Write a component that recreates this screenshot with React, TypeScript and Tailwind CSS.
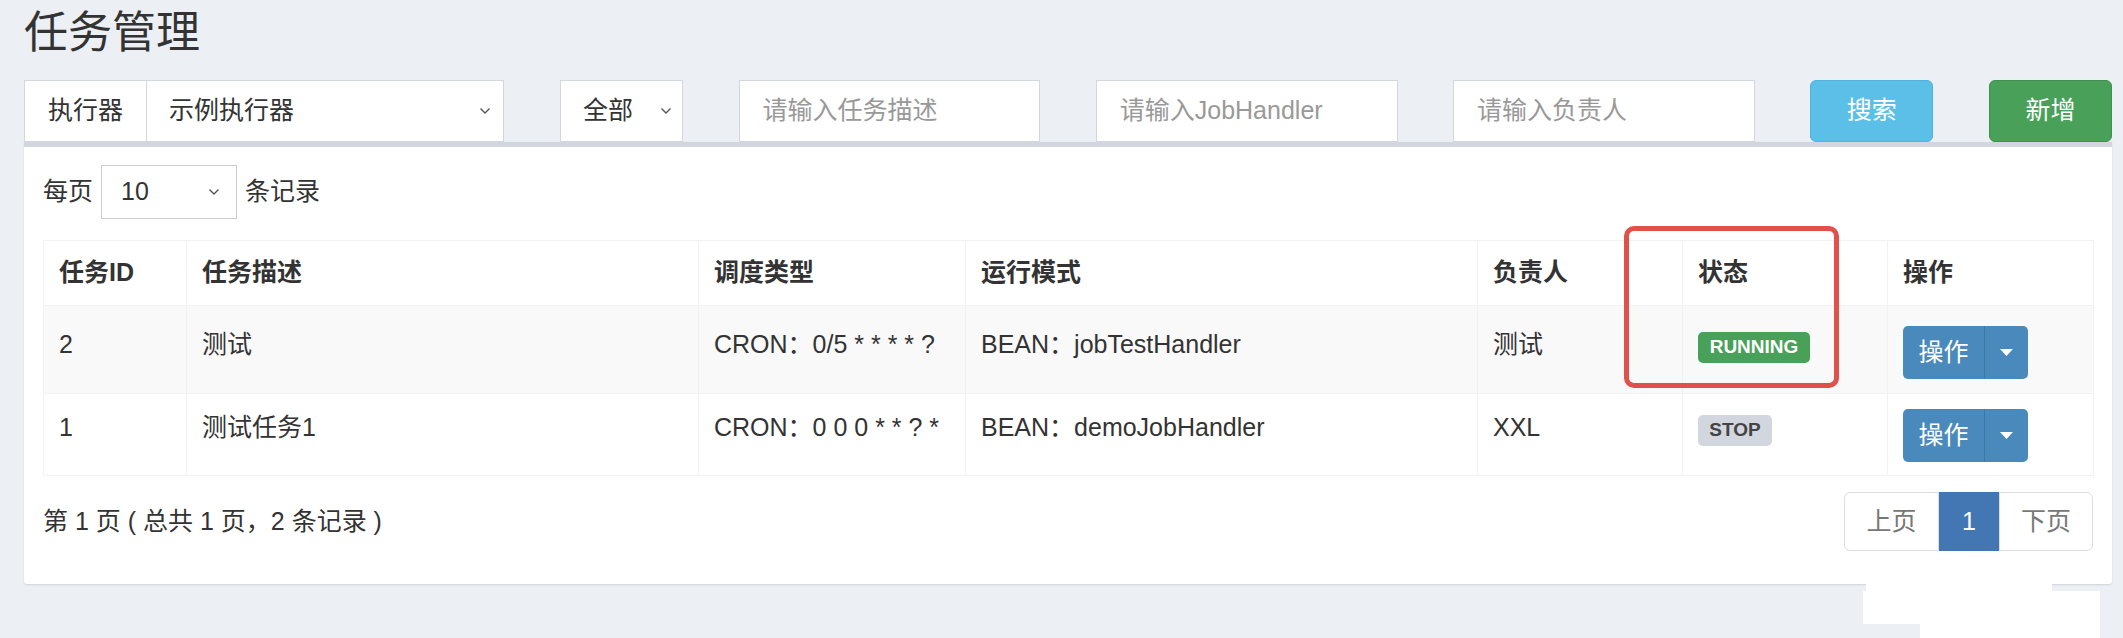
import React from 'react'

const jobs = [
  { id: '2', desc: '测试', cron: 'CRON：0/5 * * * * ?', mode: 'BEAN：jobTestHandler', owner: '测试', status: 'RUNNING' },
  { id: '1', desc: '测试任务1', cron: 'CRON：0 0 0 * * ? *', mode: 'BEAN：demoJobHandler', owner: 'XXL', status: 'STOP' },
]

const headers = ['任务ID', '任务描述', '调度类型', '运行模式', '负责人', '状态', '操作']
const colWidths = ['w-[143px]', 'w-[512px]', 'w-[267px]', 'w-[512px]', 'w-[205px]', 'w-[205px]', 'w-[206px]']

function Chevron() {
  return (
    <svg width="12" height="8" viewBox="0 0 12 8" className="shrink-0">
      <polyline points="1.5,1.5 6,6 10.5,1.5" fill="none" stroke="#555" strokeWidth="1.4" />
    </svg>
  )
}

function Caret() {
  return (
    <svg width="13" height="8" viewBox="0 0 13 8">
      <polygon points="0,0 13,0 6.5,7" fill="#fff" />
    </svg>
  )
}

function OpButton() {
  return (
    <div className="flex h-[53px] w-[125px] rounded-[5px] bg-[#4a89bb] text-white">
      <div className="flex w-[81px] items-center justify-center text-[25px]">操作</div>
      <div className="flex flex-1 items-center justify-center border-l border-[#3d77a5]">
        <Caret />
      </div>
    </div>
  )
}

function StatusBadge({ status }: { status: string }) {
  const running = status === 'RUNNING'
  return (
    <div
      className={
        running
          ? 'mt-[6px] flex h-[31px] w-[112px] items-center justify-center rounded-[5px] bg-[#48a059] text-[19px] font-bold text-white'
          : 'mt-[6px] flex h-[31px] w-[74px] items-center justify-center rounded-[5px] bg-[#d2d6de] text-[19px] font-bold text-[#444]'
      }
    >
      {status}
    </div>
  )
}

export default function App() {
  return (
    <div className="relative min-h-[638px] w-full overflow-hidden bg-[#ecf0f5] pl-[24px] pr-[11px] font-['Liberation_Sans','Noto_Sans_CJK_SC',sans-serif] text-[#333]">
      {/* header */}
      <h1 className="h-[65px] text-[44px] leading-[65px] font-normal">任务管理</h1>

      {/* filters */}
      <div className="mt-[15px] grid h-[62px] grid-cols-12 gap-x-[55.5px] text-[25px]">
        <div className="col-span-3 flex border border-[#d2d6de] bg-white">
          <div className="flex w-[122px] items-center justify-center border-r border-[#d2d6de]">执行器</div>
          <div className="flex flex-1 items-center justify-between pl-[22px] pr-[12px]">
            <span>示例执行器</span>
            <Chevron />
          </div>
        </div>
        <div className="flex items-center justify-between border border-[#d2d6de] bg-white pl-[22px] pr-[10px]">
          <span>全部</span>
          <Chevron />
        </div>
        <input
          className="col-span-2 border border-[#d2d6de] bg-white px-[23px] text-[25px] outline-none placeholder:text-[#999]"
          placeholder="请输入任务描述"
        />
        <input
          className="col-span-2 border border-[#d2d6de] bg-white px-[23px] text-[25px] outline-none placeholder:text-[#999]"
          placeholder="请输入JobHandler"
        />
        <input
          className="col-span-2 border border-[#d2d6de] bg-white px-[23px] text-[25px] outline-none placeholder:text-[#999]"
          placeholder="请输入负责人"
        />
        <button className="rounded-[6px] border border-[#4fb3dd] bg-[#5bbfe8] text-white">搜索</button>
        <button className="rounded-[6px] border border-[#3f9150] bg-[#48a059] text-white">新增</button>
      </div>

      {/* box */}
      <div className="rounded-b-[3px] border-t-[5px] border-[#d2d6de] bg-white px-[19px] pt-[18px] pb-[33px] shadow-[0_1px_2px_rgba(0,0,0,0.12)]">
        <div className="flex h-[54px] items-center gap-[8px] text-[25px]">
          <span>每页</span>
          <div className="flex h-[54px] w-[136px] items-center justify-between border border-[#ccc] pl-[19px] pr-[16px]">
            <span>10</span>
            <Chevron />
          </div>
          <span>条记录</span>
        </div>

        <table className="mt-[21px] w-[2050px] table-fixed border-collapse border border-[#f2f2f2] text-[25px]">
          <thead>
            <tr className="h-[65px]">
              {headers.map((h, i) => (
                <th key={h} className={`${colWidths[i]} border border-[#f2f2f2] px-[15px] text-left align-middle font-bold`}>
                  {h}
                </th>
              ))}
            </tr>
          </thead>
          <tbody>
            {jobs.map((job, idx) => {
              const rowCls = idx === 0 ? 'h-[88px] bg-[#f9f9f9]' : 'h-[82px] bg-white'
              const pad = idx === 0 ? 'pt-[20px]' : 'pt-[15px]'
              const cell = `border border-[#f2f2f2] px-[15px] align-top leading-[36px] ${pad}`
              return (
                <tr key={job.id} className={rowCls}>
                  <td className={cell}>{job.id}</td>
                  <td className={cell}>{job.desc}</td>
                  <td className={cell}>{job.cron}</td>
                  <td className={cell}>{job.mode}</td>
                  <td className={cell}>{job.owner}</td>
                  <td className={`border border-[#f2f2f2] px-[15px] align-top ${pad}`}>
                    <StatusBadge status={job.status} />
                  </td>
                  <td className={`border border-[#f2f2f2] px-[15px] align-top ${pad}`}>
                    <OpButton />
                  </td>
                </tr>
              )
            })}
          </tbody>
        </table>

        <div className="mt-[16px] flex h-[59px] w-[2050px] items-center justify-between text-[25px]">
          <span>第 1 页 ( 总共 1 页，2 条记录 )</span>
          <div className="flex h-[59px] text-[#777]">
            <div className="flex w-[95px] items-center justify-center rounded-l-[6px] border border-[#ddd]">上页</div>
            <div className="flex w-[60px] items-center justify-center bg-[#4277b3] text-white">1</div>
            <div className="flex w-[94px] items-center justify-center rounded-r-[6px] border border-[#ddd]">下页</div>
          </div>
        </div>
      </div>

      {/* highlight */}
      <div className="absolute left-[1624px] top-[226px] h-[162px] w-[215px] rounded-[10px] border-[5px] border-[#e0514b]" />

      {/* erased patch bottom right */}
      <div className="absolute left-[1866px] top-[577px] h-[14px] w-[186px] bg-white" />
      <div className="absolute left-[1863px] top-[591px] h-[33px] w-[237px] bg-white" />
      <div className="absolute left-[1920px] top-[624px] h-[14px] w-[180px] bg-white" />
    </div>
  )
}
